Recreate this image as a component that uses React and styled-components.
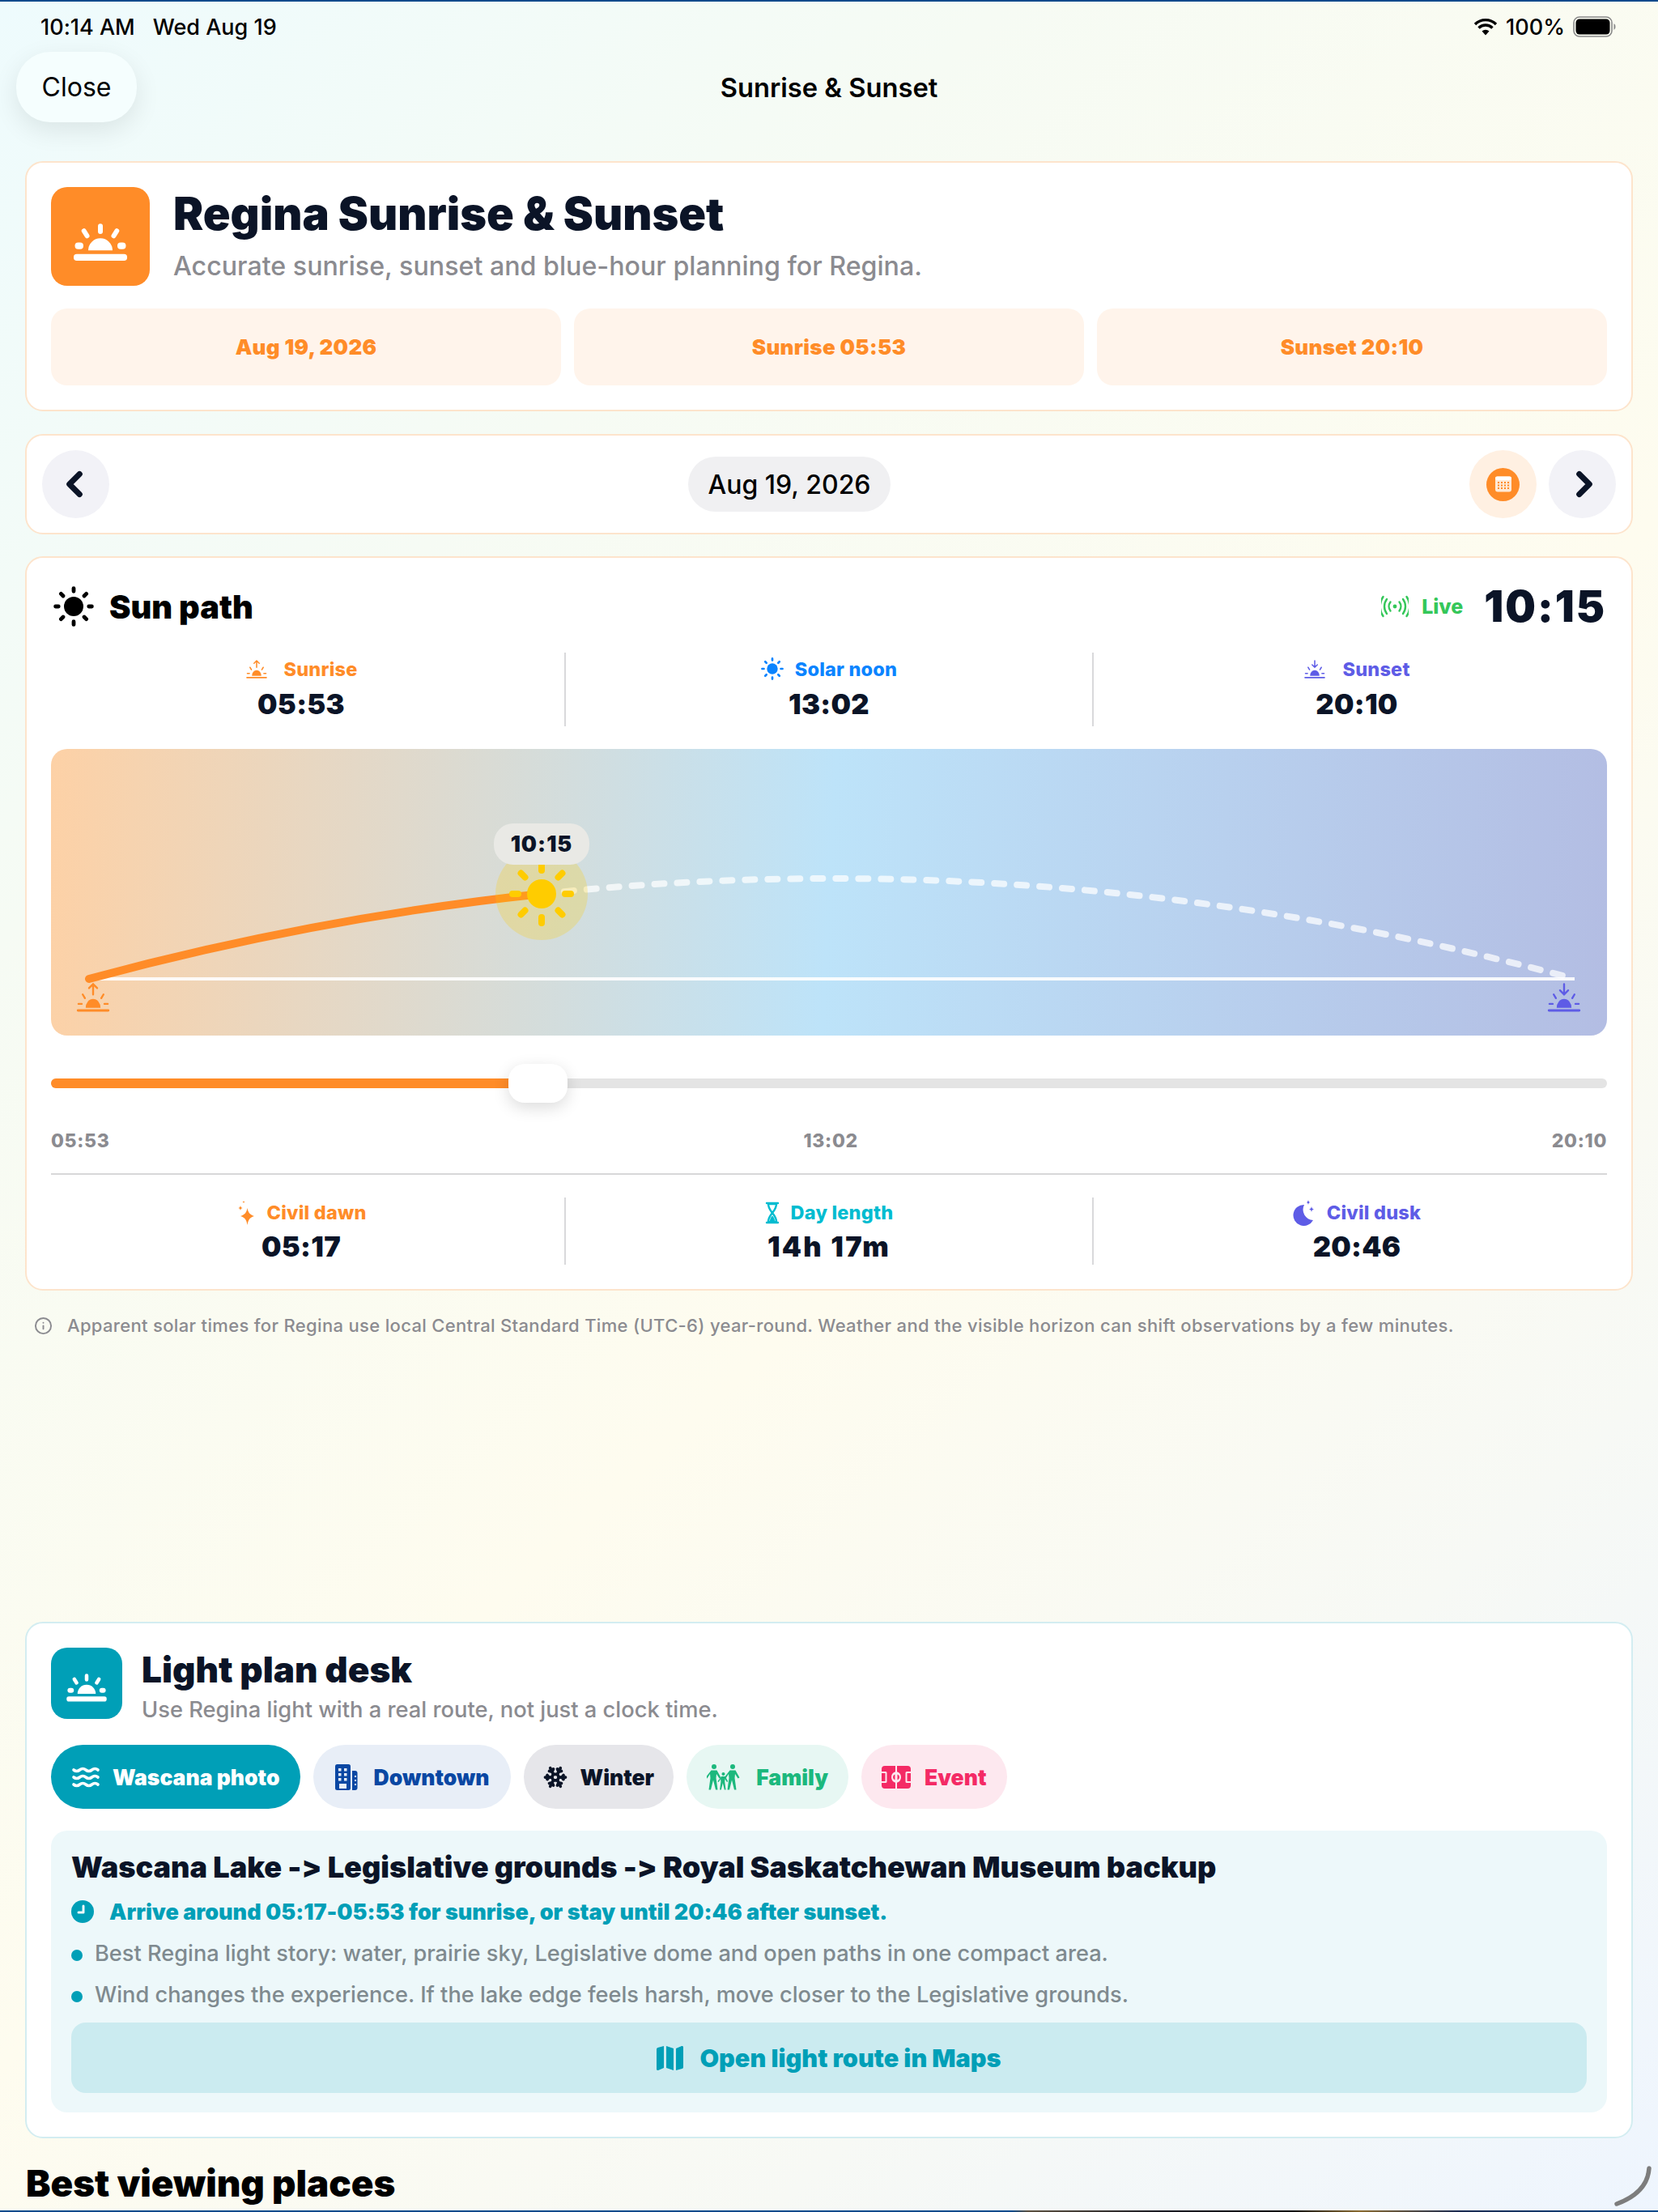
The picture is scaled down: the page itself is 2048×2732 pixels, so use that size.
import React from 'react';
import styled, { createGlobalStyle } from 'styled-components';
import { ChevronLeft, ChevronRight, Info, Waves, Snowflake } from 'lucide-react';

const GlobalStyle = createGlobalStyle`
  html, body {
    margin: 0;
    padding: 0;
    background: #fdfcf1;
  }
  * {
    box-sizing: border-box;
  }
`;

const ORANGE = '#ff8c28';
const BLUE = '#0a84ff';
const INDIGO = '#5e5ce6';
const CYAN = '#00bcd0';
const TEAL = '#009fb7';
const NAVY = '#0b1427';
const GRAY = '#8b8b90';

const Page = styled.div`
  position: relative;
  width: 2048px;
  height: 2732px;
  overflow: hidden;
  font-family: Inter, 'Noto Sans', sans-serif;
  font-variant-ligatures: none;
  font-feature-settings: 'calt' 0, 'liga' 0;
  color: #000;
  background: linear-gradient(137deg, #eefbfd 0%, #f6fbf4 25%, #fefcef 55%, #f7f9f5 78%, #eef5fe 100%);

  &::before {
    content: '';
    position: absolute;
    top: 0;
    left: 0;
    right: 0;
    height: 2px;
    background: #0c4a8c;
  }
`;

const BottomStrip = styled.div`
  position: absolute;
  left: 0;
  right: 0;
  bottom: 0;
  height: 2px;
  background: linear-gradient(90deg, #0c4a8c 0%, #0c4a8c 61%, #5b5040 62%, #1a1a22 70%, #111 78%, #8a6a30 82%, #1a2a50 88%, #0c4a8c 100%);
`;

const StatusBar = styled.div`
  height: 64px;
  padding: 2px 52px 0 50px;
  display: flex;
  align-items: center;
  justify-content: space-between;
  font-size: 27px;
  font-weight: 500;
`;

const StatusGroup = styled.div`
  display: flex;
  align-items: center;
  gap: ${p => p.$gap || 10}px;
`;

const Nav = styled.div`
  height: 87px;
  padding: 0 20px;
  display: grid;
  grid-template-columns: 1fr auto 1fr;
  align-items: center;
`;

const CloseButton = styled.button`
  width: 149px;
  height: 87px;
  border: none;
  border-radius: 42px;
  background: #f5fefe;
  box-shadow: 0 10px 32px rgba(0, 0, 0, 0.09);
  font: 400 32px Inter, sans-serif;
  color: #000;
`;

const NavTitle = styled.div`
  font-size: 32.7px;
  font-weight: 600;
`;

const Card = styled.section`
  width: 1986px;
  margin: ${p => p.$top}px 0 0 31px;
  padding: ${p => p.$pad || '30px'};
  background: #fff;
  border: 2px solid ${p => p.$border || '#fde4cc'};
  border-radius: 22px;
`;

const Hero = styled.div`
  height: ${p => p.$height}px;
  display: flex;
  align-items: flex-start;
  gap: ${p => p.$gap}px;
`;

const IconTile = styled.div`
  flex: none;
  width: ${p => p.$size}px;
  height: ${p => p.$size}px;
  border-radius: 20px;
  background: ${p => p.$bg};
  display: flex;
  align-items: center;
  justify-content: center;
`;

const HeroTitle = styled.h1`
  margin: 0;
  font-size: ${p => p.$size}px;
  line-height: ${p => p.$line}px;
  font-weight: 900;
  color: ${NAVY};
`;

const HeroSub = styled.p`
  margin: ${p => p.$gap}px 0 0;
  font-size: ${p => p.$size}px;
  line-height: 40px;
  font-weight: 500;
  color: ${GRAY};
`;

const ChipRow = styled.div`
  margin-top: 28px;
  display: grid;
  grid-template-columns: repeat(3, 1fr);
  gap: 16px;
`;

const FactChip = styled.div`
  height: 95px;
  border-radius: 20px;
  background: #fff4eb;
  color: ${ORANGE};
  font-size: 26px;
  font-weight: 900;
  letter-spacing: 0.3px;
  display: flex;
  align-items: center;
  justify-content: center;
`;

const DateBar = styled.div`
  display: flex;
  align-items: center;
`;

const DateSlot = styled.div`
  flex: 1;
  display: flex;
  justify-content: center;
`;

const DateActions = styled.div`
  display: flex;
  gap: 15px;
`;

const RoundButton = styled.button`
  width: 83px;
  height: 84px;
  padding: 0;
  border: none;
  border-radius: 50%;
  background: ${p => p.$bg || '#f2f2f7'};
  color: ${NAVY};
  display: flex;
  align-items: center;
  justify-content: center;

  svg {
    transform: translateX(${p => p.$nudge || 0}px);
  }
`;

const DatePill = styled.div`
  height: 68px;
  padding: 0 24px;
  border-radius: 34px;
  background: #f0f0f2;
  font-size: 32px;
  font-weight: 500;
  display: flex;
  align-items: center;
`;

const CalendarDot = styled.div`
  width: 41px;
  height: 41px;
  border-radius: 50%;
  background: ${ORANGE};
  display: flex;
  align-items: center;
  justify-content: center;
`;

const PathHeader = styled.div`
  height: 60px;
  padding-right: 1px;
  display: flex;
  align-items: center;
  justify-content: space-between;
`;

const PathTitle = styled.h2`
  margin: 0;
  font-size: 39.8px;
  font-weight: 900;
  display: flex;
  align-items: center;
  gap: 19px;
  padding-left: 3px;
`;

const LiveGroup = styled.div`
  display: flex;
  align-items: center;
`;

const LiveLabel = styled.span`
  margin: 0 26px 0 16px;
  font-size: 25px;
  font-weight: 800;
  color: #34c759;
`;

const LiveTime = styled.span`
  font-size: 53px;
  font-weight: 900;
  letter-spacing: 2px;
  color: ${NAVY};
`;

const StatRow = styled.div`
  margin-top: ${p => p.$top}px;
  height: ${p => p.$height}px;
  display: flex;
  gap: 16px;
`;

const Stat = styled.div`
  flex: 1;
  display: flex;
  flex-direction: column;
  align-items: center;
`;

const StatLabel = styled.div`
  height: 40px;
  display: flex;
  align-items: center;
  gap: ${p => p.$gap || 20}px;
  font-size: 23.5px;
  font-weight: 800;
  letter-spacing: 0.2px;
  color: ${p => p.$color};
`;

const StatValue = styled.div`
  font-size: 34.5px;
  line-height: 44px;
  margin-top: 2px;
  font-weight: 900;
  letter-spacing: ${p => p.$track || 0.3}px;
  color: ${NAVY};
`;

const StatDivider = styled.div`
  flex: none;
  width: 2px;
  background: #d9d9db;
`;

const Sky = styled.div`
  position: relative;
  margin-top: 28px;
  height: 354px;
  border-radius: 20px;
  overflow: hidden;
  background: linear-gradient(93deg, #fdd1a6 0%, #bde3f9 50%, #b3bde3 100%);
`;

const SkyDrawing = styled.svg`
  position: absolute;
  inset: 0;
  width: 100%;
  height: 100%;
`;

const TimeBubble = styled.div`
  position: absolute;
  left: 547px;
  top: 92px;
  width: 118px;
  height: 51px;
  border-radius: 24px;
  background: #e9e9e5;
  color: ${NAVY};
  font-size: 27px;
  font-weight: 900;
  letter-spacing: 1px;
  display: flex;
  align-items: center;
  justify-content: center;
`;

const HorizonMark = styled.div`
  position: absolute;
  top: 284px;
  ${p => p.$side}: ${p => p.$offset}px;
  width: 44px;
  height: 44px;
`;

const Slider = styled.div`
  position: relative;
  margin-top: 35px;
  height: 48px;
  display: flex;
  align-items: center;
`;

const Track = styled.div`
  width: 100%;
  height: 12px;
  border-radius: 6px;
  background: #e4e4e4;
  overflow: hidden;
`;

const TrackFill = styled.div`
  height: 100%;
  background: ${ORANGE};
`;

const Thumb = styled.div`
  position: absolute;
  top: 0;
  width: 73px;
  height: 48px;
  border-radius: 20px;
  background: #fff;
  box-shadow: 0 6px 20px rgba(0, 0, 0, 0.14);
`;

const ScaleRow = styled.div`
  margin-top: 32px;
  height: 30px;
  display: flex;
  align-items: center;
  justify-content: space-between;
  font-size: 23px;
  font-weight: 800;
  letter-spacing: 0.7px;
  color: ${GRAY};
`;

const Rule = styled.div`
  margin-top: 25px;
  height: 2px;
  background: #d7d7d9;
`;

const Note = styled.div`
  margin: 28px 0 0 42px;
  height: 30px;
  display: flex;
  align-items: center;
  gap: 18px;
  font-size: 22px;
  font-weight: 500;
  letter-spacing: 0.33px;
  color: ${GRAY};
`;

const FilterRow = styled.div`
  margin-top: 32px;
  display: flex;
  gap: 16px;
`;

const FilterChip = styled.button`
  height: 79px;
  padding: 0 ${p => p.$pad || 26}px;
  border: none;
  border-radius: 40px;
  background: ${p => p.$bg};
  color: ${p => p.$color};
  font: 900 26.500px Inter, sans-serif;
  font-variant-ligatures: none;
  display: flex;
  align-items: center;
  gap: ${p => p.$gap || 18}px;
`;

const RoutePanel = styled.div`
  margin-top: 27px;
  height: 348px;
  padding: 22px 25px 24px;
  border-radius: 20px;
  background: #edf8fa;
`;

const RouteTitle = styled.h3`
  margin: 0;
  font-size: 36.1px;
  line-height: 46px;
  font-weight: 900;
  color: ${NAVY};
`;

const ArriveLine = styled.div`
  margin-top: 15px;
  height: 34px;
  display: flex;
  align-items: center;
  gap: 19px;
  font-size: 27px;
  font-weight: 900;
  color: ${TEAL};
`;

const TipList = styled.ul`
  margin: 14px 0 0;
  padding: 0;
  list-style: none;
  display: flex;
  flex-direction: column;
  gap: 11px;
`;

const Tip = styled.li`
  height: 40px;
  display: flex;
  align-items: center;
  gap: 15px;
  font-size: 27.200px;
  font-weight: 500;
  color: #7f8a8f;

  &::before {
    content: '';
    width: 14px;
    height: 14px;
    border-radius: 50%;
    background: ${TEAL};
    margin-top: 6px;
  }
`;

const MapsButton = styled.button`
  width: 100%;
  height: 87px;
  margin-top: 15px;
  border: none;
  border-radius: 18px;
  background: #cbebf0;
  color: ${TEAL};
  font: 900 30.600px Inter, sans-serif;
  display: flex;
  align-items: center;
  justify-content: center;
  gap: 20px;
`;

const PlacesTitle = styled.h2`
  margin: 26px 0 0 32px;
  font-size: 45.700px;
  line-height: 60px;
  font-weight: 900;
`;

const CornerGrip = styled.svg`
  position: absolute;
  right: 0;
  bottom: 0;
  width: 60px;
  height: 60px;
`;

/* drawings */

const SunHorizon = ({ color, size }) => (
  <svg width={size} height={size} viewBox="0 0 48 48" fill={color}>
    <rect x="2" y="38.500" width="44" height="5.500" rx="2.500" />
    <path d="M14 35.500a10 10 0 0 1 20 0z" />
    <rect x="3" y="29" width="7" height="5.500" rx="2.700" />
    <rect x="38" y="29" width="7" height="5.500" rx="2.700" />
    <g stroke={color} strokeWidth="4" strokeLinecap="round" fill="none">
      <path d="M24 15.500v4.500M10.500 19.500l2.500 4M37.500 19.500l-2.500 4" />
    </g>
  </svg>
);

const SunArrow = ({ color, size, down }) => (
  <svg width={size} height={size} viewBox="0 0 48 48" fill={color}>
    <rect x="2" y="41" width="44" height="3.200" rx="1.600" />
    <path d="M14 39a10 12 0 0 1 20 0z" />
    <rect x="3" y="32.500" width="7" height="2.500" rx="1.200" />
    <rect x="38" y="32.500" width="7" height="2.500" rx="1.200" />
    <g stroke={color} strokeWidth="2.600" strokeLinecap="round" fill="none">
      <path d={down ? 'M24 7v14M18.500 15.500l5.500 5.500 5.500-5.500' : 'M24 21V7M18.500 12.500L24 7l5.500 5.500'} />
      <path d="M10 21l3 5M38 21l-3 5" />
    </g>
  </svg>
);

const SunIcon = ({ color, size }) => (
  <svg width={size} height={size} viewBox="0 0 48 48" fill={color}>
    <circle cx="24" cy="24" r="11.500" />
    <g stroke={color} strokeWidth="4.600" strokeLinecap="round">
      <path d="M24 2.500v3.500M24 42v3.500M2.500 24h3.500M42 24h3.500M9 9l2.500 2.500M36.500 36.500l2.500 2.500M9 39l2.500-2.500M36.500 11.500l2.500-2.500" />
    </g>
  </svg>
);

const LiveIcon = () => (
  <svg width="34" height="28" viewBox="1 0 34 28" fill="none" stroke="#34c759" strokeWidth="2.400" strokeLinecap="round">
    <circle cx="18" cy="14" r="2.400" fill="#34c759" stroke="none" />
    <path d="M12.500 8.500a9 9 0 0 0 0 11M23.500 8.500a9 9 0 0 1 0 11" />
    <path d="M8 5a15 15 0 0 0 0 18M28 5a15 15 0 0 1 0 18" />
    <path d="M3.500 2a21 21 0 0 0 0 24M32.500 2a21 21 0 0 1 0 24" />
  </svg>
);

const SparkleIcon = () => (
  <svg width="24" height="30" viewBox="0 0 24 30" fill={ORANGE}>
    <path d="M14.500 9C15.500 14 17 17 23 19 17 21 15.500 24 14.500 30 13.500 24 12 21 6 19 12 17 13.500 14 14.500 9z" />
    <path d="M6 6c.4 2 1 2.600 3 3-2 .4-2.600 1-3 3-.4-2-1-2.600-3-3 2-.4 2.600-1 3-3z" />
    <path d="M10 0c.2 1 .6 1.300 1.600 1.600-1 .3-1.400.6-1.600 1.600-.2-1-.6-1.300-1.600-1.600 1-.3 1.400-.6 1.600-1.600z" />
  </svg>
);

const HourglassIcon = () => (
  <svg width="18" height="28" viewBox="0 0 18 28" fill="none" stroke={CYAN} strokeWidth="2.400" strokeLinecap="round">
    <path d="M2 2h14M2 26h14" />
    <path d="M4 3c0 5 2 7 5 11 3-4 5-6 5-11zM4 25c0-5 2-7 5-11 3 4 5 6 5 11z" fill="none" />
    <path d="M6 24c0-3 1.500-5 3-6.500 1.500 1.500 3 3.500 3 6.500z" fill={CYAN} stroke="none" />
  </svg>
);

const MoonIcon = () => (
  <svg width="28" height="32" viewBox="0 0 28 32" fill={INDIGO}>
    <path d="M14 6a13 13 0 1 0 11 19A13 13 0 0 1 14 6z" />
    <path d="M19 0c.4 2 .8 2.500 2 3-1.200.5-1.600 1-2 3-.4-2-.8-2.500-2-3 1.200-.5 1.600-1 2-3z" />
    <path d="M23 8c.5 2.500 1 3 3 3.500-2 .5-2.500 1-3 3.500-.5-2.500-1-3-3-3.500 2-.5 2.500-1 3-3.500z" />
  </svg>
);

const BuildingIcon = () => (
  <svg width="30" height="34" viewBox="0 0 30 34" fill="#0a47a3">
    <rect x="1" y="1" width="19" height="32" rx="2.500" />
    <path d="M22 9h3.500a3 3 0 0 1 3 3v18a3 3 0 0 1-3 3H22z" />
    <g fill="#e8eef7">
      <rect x="5" y="6" width="3.500" height="3.500" />
      <rect x="12" y="6" width="3.500" height="3.500" />
      <rect x="5" y="12" width="3.500" height="3.500" />
      <rect x="12" y="12" width="3.500" height="3.500" />
      <rect x="5" y="18" width="3.500" height="3.500" />
      <rect x="12" y="18" width="3.500" height="3.500" />
      <rect x="6" y="25" width="9" height="6" />
      <rect x="25" y="15" width="2" height="2" />
      <rect x="25" y="20" width="2" height="2" />
      <rect x="25" y="25" width="2" height="2" />
    </g>
  </svg>
);

const Person = ({ x, y, scale }) => (
  <g transform={`translate(${x} ${y}) scale(${scale})`}>
    <circle cx="0" cy="3" r="3" />
    <path d="M-3.500 7.500h7l5 9-2 1-3.500-5.500-.5 5 2 14.500h-2.500l-3-12-3 12h-2.500l2-14.500-.5-5-3.500 5.500-2-1z" />
  </g>
);

const FamilyIcon = () => (
  <svg width="42" height="32" viewBox="0 0 42 32" fill="#1cb87d">
    <Person x={9} y={0} scale={1} />
    <Person x={32} y={0} scale={1} />
    <Person x={20.5} y={10} scale={0.68} />
  </svg>
);

const PitchIcon = () => (
  <svg width="36" height="28" viewBox="0 0 36 28">
    <path fill="#f42a65" fillRule="evenodd" d="M4 0h13v7.300a7 7 0 0 0 0 13.400V28H4a4 4 0 0 1-4-4v-3h5a1.500 1.500 0 0 0 1.500-1.500v-11A1.500 1.500 0 0 0 5 7H0V4a4 4 0 0 1 4-4zM19 0h13a4 4 0 0 1 4 4v3h-5a1.500 1.500 0 0 0-1.500 1.500v11A1.500 1.500 0 0 0 31 21h5v3a4 4 0 0 1-4 4H19v-7.300a7 7 0 0 0 0-13.400z" />
    <path fill="#f42a65" d="M0 9h4.500v10H0zM31.500 9H36v10h-4.500zM16.500 10.500v7a3.700 3.700 0 0 1 0-7zM19.500 10.500a3.700 3.700 0 0 1 0 7z" />
  </svg>
);

const ClockIcon = () => (
  <svg width="28" height="28" viewBox="0 0 28 28">
    <circle cx="14" cy="14" r="14" fill={TEAL} />
    <path d="M15 7v8H9" fill="none" stroke="#edf8fa" strokeWidth="3" strokeLinecap="round" strokeLinejoin="round" />
  </svg>
);

const MapIcon = () => (
  <svg width="33" height="30" viewBox="0 0 33 30" fill={TEAL}>
    <path d="M0 4a2 2 0 0 1 1.500-2L9 0v27l-7 3a1.500 1.500 0 0 1-2-1.500z" />
    <path d="M12 0l9 3v27l-9-3z" />
    <path d="M24 3l7-3a1.500 1.500 0 0 1 2 1.500V26a2 2 0 0 1-1.500 2L24 30z" />
  </svg>
);

const WifiIcon = () => (
  <svg width="30" height="22" viewBox="0 0 30 22" fill="none" stroke="#000" strokeWidth="3.400">
    <path d="M2 8a18.500 18.500 0 0 1 26 0" />
    <path d="M6.500 12.500a12 12 0 0 1 17 0" />
    <path d="M15 21.500l-4.500-5a6.500 6.500 0 0 1 9 0z" fill="#000" stroke="none" />
  </svg>
);

const BatteryIcon = () => (
  <svg width="53" height="26" viewBox="0 0 53 26">
    <rect x="1" y="1" width="47" height="24" rx="7" fill="none" stroke="#8a8a8a" strokeWidth="1.600" />
    <rect x="3.500" y="3.500" width="42" height="19" rx="4.500" fill="#000" />
    <path d="M50.500 9v8a4 4 0 0 0 2-4 4 4 0 0 0-2-4z" fill="#8a8a8a" />
  </svg>
);

const CalendarGlyph = () => (
  <svg width="22" height="22" viewBox="0 0 22 22" fill="none">
    <rect x="1" y="1.500" width="20" height="19" rx="3" fill="#ffe9d5" />
    <rect x="1" y="1.500" width="20" height="4.500" rx="2" fill="#fff" />
    <g fill={ORANGE}>
      {[8, 11.5, 15].map(y => [5, 9, 13, 17].map(x => <rect key={`${x}-${y}`} x={x - 1} y={y} width="2" height="2" />))}
    </g>
  </svg>
);

const RAY_ANGLES = [0, 45, 90, 135, 180, 225, 270, 315];

const SkyPlot = () => (
  <SkyDrawing viewBox="0 0 1922 354">
    <path d="M47 284H1882" stroke="#fff" strokeWidth="4" opacity="0.9" />
    <path d="M606 179Q1243.600 111.500 1882 284" fill="none" stroke="#fff" strokeWidth="8" strokeLinecap="round" strokeDasharray="12 16" opacity="0.72" />
    <path d="M47 284Q326.300 208.500 606 179" fill="none" stroke={ORANGE} strokeWidth="10" strokeLinecap="round" />
    <circle cx="606" cy="179" r="57" fill="#ffcc00" opacity="0.24" />
    <circle cx="606" cy="179" r="18" fill="#ffcc00" />
    <g stroke="#ffcc00" strokeWidth="8" strokeLinecap="round">
      {RAY_ANGLES.map(a => (
        <line key={a} x1="606" y1="150" x2="606" y2="143" transform={`rotate(${a} 606 179)`} />
      ))}
    </g>
  </SkyDrawing>
);

const PROGRESS = (10 * 60 + 15 - (5 * 60 + 53)) / (20 * 60 + 10 - (5 * 60 + 53));

export default function App() {
  return (
    <Page>
      <GlobalStyle />
      <StatusBar>
        <StatusGroup $gap={22}>
          <span>10:14 AM</span>
          <span>Wed Aug 19</span>
        </StatusGroup>
        <StatusGroup>
          <WifiIcon />
          <span>100%</span>
          <BatteryIcon />
        </StatusGroup>
      </StatusBar>

      <Nav>
        <div><CloseButton>Close</CloseButton></div>
        <NavTitle>Sunrise &amp; Sunset</NavTitle>
        <div />
      </Nav>

      <Card $top={48}>
        <Hero $gap={29} $height={122}>
          <IconTile $size={122} $bg={ORANGE}>
            <SunHorizon color="#fff" size={72} />
          </IconTile>
          <div>
            <HeroTitle $size={55.8} $line={66}>Regina Sunrise &amp; Sunset</HeroTitle>
            <HeroSub $size={32.2} $gap={12}>Accurate sunrise, sunset and blue-hour planning for Regina.</HeroSub>
          </div>
        </Hero>
        <ChipRow>
          <FactChip>Aug 19, 2026</FactChip>
          <FactChip>Sunrise 05:53</FactChip>
          <FactChip>Sunset 20:10</FactChip>
        </ChipRow>
      </Card>

      <Card $top={28} $pad="18px 19px">
        <DateBar>
          <RoundButton $nudge={-2}><ChevronLeft size={50} strokeWidth={3.4} /></RoundButton>
          <DateSlot><DatePill>Aug 19, 2026</DatePill></DateSlot>
          <DateActions>
            <RoundButton $bg="#fff0e2">
              <CalendarDot><CalendarGlyph /></CalendarDot>
            </RoundButton>
            <RoundButton $nudge={2}><ChevronRight size={50} strokeWidth={3.4} /></RoundButton>
          </DateActions>
        </DateBar>
      </Card>

      <Card $top={27}>
        <PathHeader>
          <PathTitle><SunIcon color="#000" size={50} />Sun path</PathTitle>
          <LiveGroup>
            <LiveIcon />
            <LiveLabel>Live</LiveLabel>
            <LiveTime>10:15</LiveTime>
          </LiveGroup>
        </PathHeader>

        <StatRow $top={27} $height={91}>
          <Stat>
            <StatLabel $color={ORANGE}><SunArrow color={ORANGE} size={28} />Sunrise</StatLabel>
            <StatValue>05:53</StatValue>
          </Stat>
          <StatDivider />
          <Stat>
            <StatLabel $color={BLUE} $gap={14}><SunIcon color={BLUE} size={28} />Solar noon</StatLabel>
            <StatValue>13:02</StatValue>
          </Stat>
          <StatDivider />
          <Stat>
            <StatLabel $color={INDIGO}><SunArrow color={INDIGO} size={28} down />Sunset</StatLabel>
            <StatValue>20:10</StatValue>
          </Stat>
        </StatRow>

        <Sky>
          <SkyPlot />
          <TimeBubble>10:15</TimeBubble>
          <HorizonMark $side="left" $offset={30}><SunArrow color={ORANGE} size={44} /></HorizonMark>
          <HorizonMark $side="right" $offset={31}><SunArrow color={INDIGO} size={44} down /></HorizonMark>
        </Sky>

        <Slider>
          <Track>
            <TrackFill style={{ width: `${PROGRESS * 100}%` }} />
          </Track>
          <Thumb style={{ left: `calc((100% - 73px) * ${PROGRESS})` }} />
        </Slider>

        <ScaleRow>
          <span>05:53</span>
          <span>13:02</span>
          <span>20:10</span>
        </ScaleRow>

        <Rule />

        <StatRow $top={28} $height={83}>
          <Stat>
            <StatLabel $color={ORANGE} $gap={14}><SparkleIcon />Civil dawn</StatLabel>
            <StatValue>05:17</StatValue>
          </Stat>
          <StatDivider />
          <Stat>
            <StatLabel $color={CYAN} $gap={14}><HourglassIcon />Day length</StatLabel>
            <StatValue $track={2.3}>14h 17m</StatValue>
          </Stat>
          <StatDivider />
          <Stat>
            <StatLabel $color={INDIGO} $gap={14}><MoonIcon />Civil dusk</StatLabel>
            <StatValue>20:46</StatValue>
          </Stat>
        </StatRow>
      </Card>

      <Note>
        <Info size={23} strokeWidth={2} />
        Apparent solar times for Regina use local Central Standard Time (UTC-6) year-round. Weather and the visible horizon can shift observations by a few minutes.
      </Note>

      <Card $top={351} $border="#d3edf1">
        <Hero $gap={24} $height={88}>
          <IconTile $size={88} $bg={TEAL}>
            <SunHorizon color="#fff" size={54} />
          </IconTile>
          <div>
            <HeroTitle $size={44} $line={54}>Light plan desk</HeroTitle>
            <HeroSub $size={27.3} $gap={3}>Use Regina light with a real route, not just a clock time.</HeroSub>
          </div>
        </Hero>

        <FilterRow>
          <FilterChip $bg={TEAL} $color="#fff" $pad={25} $gap={15}><Waves size={36} strokeWidth={2.4} />Wascana photo</FilterChip>
          <FilterChip $bg="#e8eef7" $color="#0a47a3" $gap={19}><BuildingIcon />Downtown</FilterChip>
          <FilterChip $bg="#e6e6ea" $color={NAVY} $pad={24} $gap={16}><Snowflake size={30} strokeWidth={3} />Winter</FilterChip>
          <FilterChip $bg="#e7f7f3" $color="#1cb87d" $pad={25} $gap={19}><FamilyIcon />Family</FilterChip>
          <FilterChip $bg="#fde8ef" $color="#f42a65" $pad={25} $gap={17}><PitchIcon />Event</FilterChip>
        </FilterRow>

        <RoutePanel>
          <RouteTitle>Wascana Lake -&gt; Legislative grounds -&gt; Royal Saskatchewan Museum backup</RouteTitle>
          <ArriveLine><ClockIcon />Arrive around 05:17-05:53 for sunrise, or stay until 20:46 after sunset.</ArriveLine>
          <TipList>
            <Tip>Best Regina light story: water, prairie sky, Legislative dome and open paths in one compact area.</Tip>
            <Tip>Wind changes the experience. If the lake edge feels harsh, move closer to the Legislative grounds.</Tip>
          </TipList>
          <MapsButton><MapIcon />Open light route in Maps</MapsButton>
        </RoutePanel>
      </Card>

      <PlacesTitle>Best viewing places</PlacesTitle>

      <CornerGrip viewBox="0 0 60 60">
        <path d="M49 6Q47 36 9 50" fill="none" stroke="#7d7d7d" strokeWidth="5.500" strokeLinecap="round" />
      </CornerGrip>
      <BottomStrip />
    </Page>
  );
}
